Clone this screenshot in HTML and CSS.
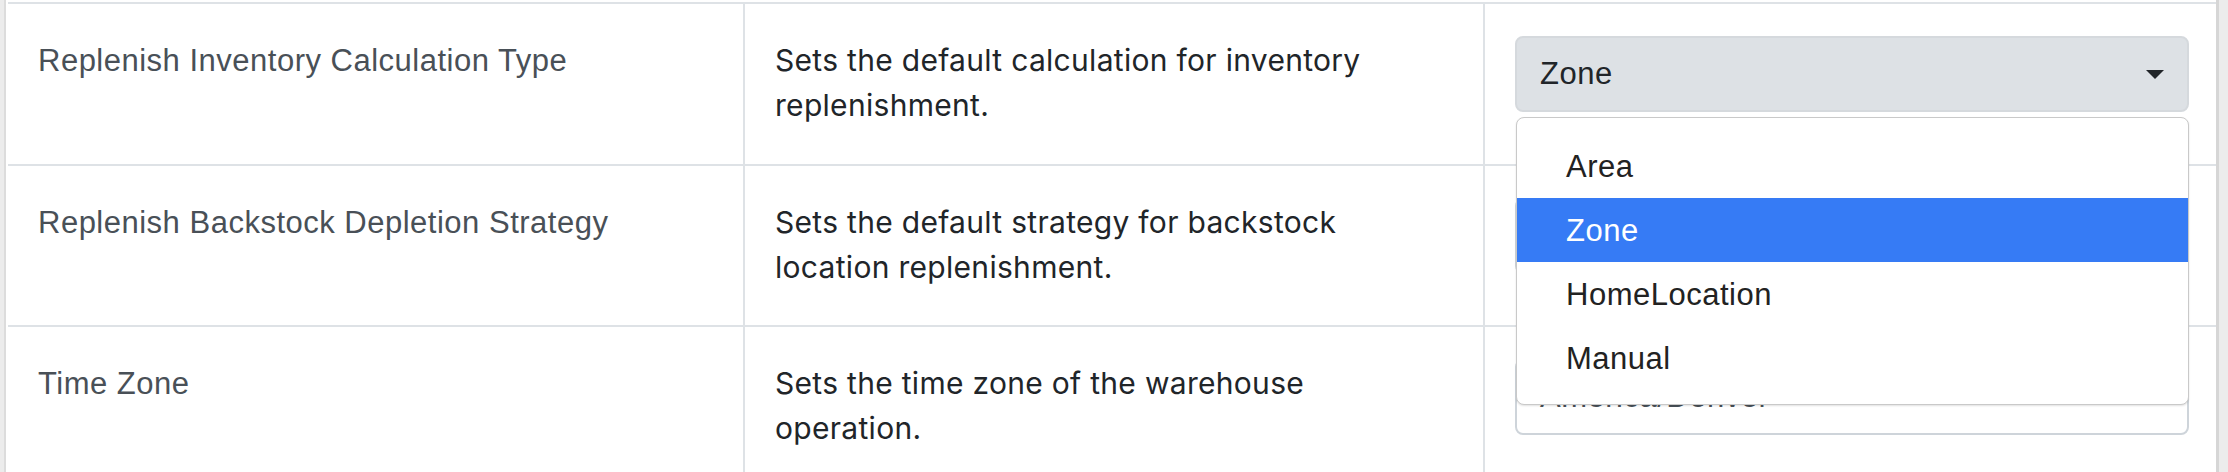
FILE: index.html
```html
<!DOCTYPE html>
<html lang="en">
<head>
<meta charset="utf-8">
<title>Settings</title>
<link rel="stylesheet" href="styles.css">
</head>
<body>
<div class="page">
  <div class="panel">
    <div class="settings">
      <div class="row">
        <div class="cell label">Replenish Inventory Calculation Type</div>
        <div class="cell desc"><p>Sets the default calculation for inventory replenishment.</p></div>
        <div class="cell control">
          <div class="select active">
            <span class="value">Zone</span>
            <svg class="caret" width="18" height="9" viewBox="0 0 18 9"><path d="M0 0H18L9 9Z"/></svg>
          </div>
        </div>
      </div>
      <div class="row">
        <div class="cell label">Replenish Backstock Depletion Strategy</div>
        <div class="cell desc"><p>Sets the default strategy for backstock location replenishment.</p></div>
        <div class="cell control">
          <div class="select">
            <span class="value"></span>
            <svg class="caret" width="18" height="9" viewBox="0 0 18 9"><path d="M0 0H18L9 9Z"/></svg>
          </div>
        </div>
      </div>
      <div class="row">
        <div class="cell label">Time Zone</div>
        <div class="cell desc"><p>Sets the time zone of the warehouse operation.</p></div>
        <div class="cell control">
          <div class="select">
            <span class="value muted">America/Denver</span>
            <svg class="caret" width="18" height="9" viewBox="0 0 18 9"><path d="M0 0H18L9 9Z"/></svg>
          </div>
        </div>
      </div>
    </div>
  </div>
  <ul class="dropdown">
    <li class="option">Area</li>
    <li class="option selected">Zone</li>
    <li class="option">HomeLocation</li>
    <li class="option">Manual</li>
  </ul>
</div>
</body>
</html>
```
FILE: styles.css
```css
html, body {
  margin: 0;
  padding: 0;
  background: #fff;
  overflow: hidden;
}

.page {
  position: relative;
  display: flex;
  height: 472px;
  box-sizing: border-box;
  padding: 0 9px 0 4px;
  background: #ececec;
}

.panel {
  flex: 1;
  background: #fff;
  border-left: 2px solid #dcdcdc;
  border-right: 3px solid #d6d6d6;
  padding: 2px 0 0 2px;
  overflow: hidden;
}

.row {
  display: grid;
  grid-template-columns: 735px 740px 1fr;
  height: 161.5px;
  box-sizing: border-box;
  border-top: 2px solid #dee2e6;
}

.cell {
  padding: 34px 30px 0 30px;
  min-width: 0;
}

.cell + .cell {
  border-left: 2px solid #dee2e6;
}

.label {
  font-family: "Liberation Sans", Arial, sans-serif;
  font-size: 31px;
  letter-spacing: 0.5px;
  line-height: 45px;
  color: #495057;
}

.desc p {
  margin: 0;
  max-width: 640px;
  font-family: Inter, "Noto Sans", sans-serif;
  font-size: 30px;
  letter-spacing: 0.3px;
  line-height: 45px;
  color: #212529;
}

.control {
  padding: 32px 27px 0 30px;
}

.select {
  display: flex;
  align-items: center;
  justify-content: space-between;
  height: 76px;
  box-sizing: border-box;
  padding: 0 23px 0 23px;
  border: 2px solid #ced4da;
  border-radius: 8px;
  background: #fff;
  font-family: "Liberation Sans", Arial, sans-serif;
  font-size: 31px;
  letter-spacing: 0.5px;
  color: #212529;
}

.select.active {
  background: #dde1e5;
  border-color: #d5d9dd;
}

.value.muted {
  color: #495057;
}

.caret {
  display: block;
  fill: #212529;
}

.dropdown {
  position: absolute;
  left: 1516px;
  top: 117px;
  width: 673px;
  height: 288px;
  box-sizing: border-box;
  margin: 0;
  padding: 16px 0 14px 0;
  list-style: none;
  background: #fff;
  border: 1px solid #c9c9c9;
  border-radius: 8px;
  box-shadow: 0 1px 2px rgba(0, 0, 0, 0.12);
  font-family: "Liberation Sans", Arial, sans-serif;
  font-size: 31px;
  letter-spacing: 0.5px;
  color: #222;
}

.option {
  height: 64px;
  line-height: 66px;
  padding-left: 49px;
}

.option.selected {
  background: #367bf5;
  color: #fff;
}
```
